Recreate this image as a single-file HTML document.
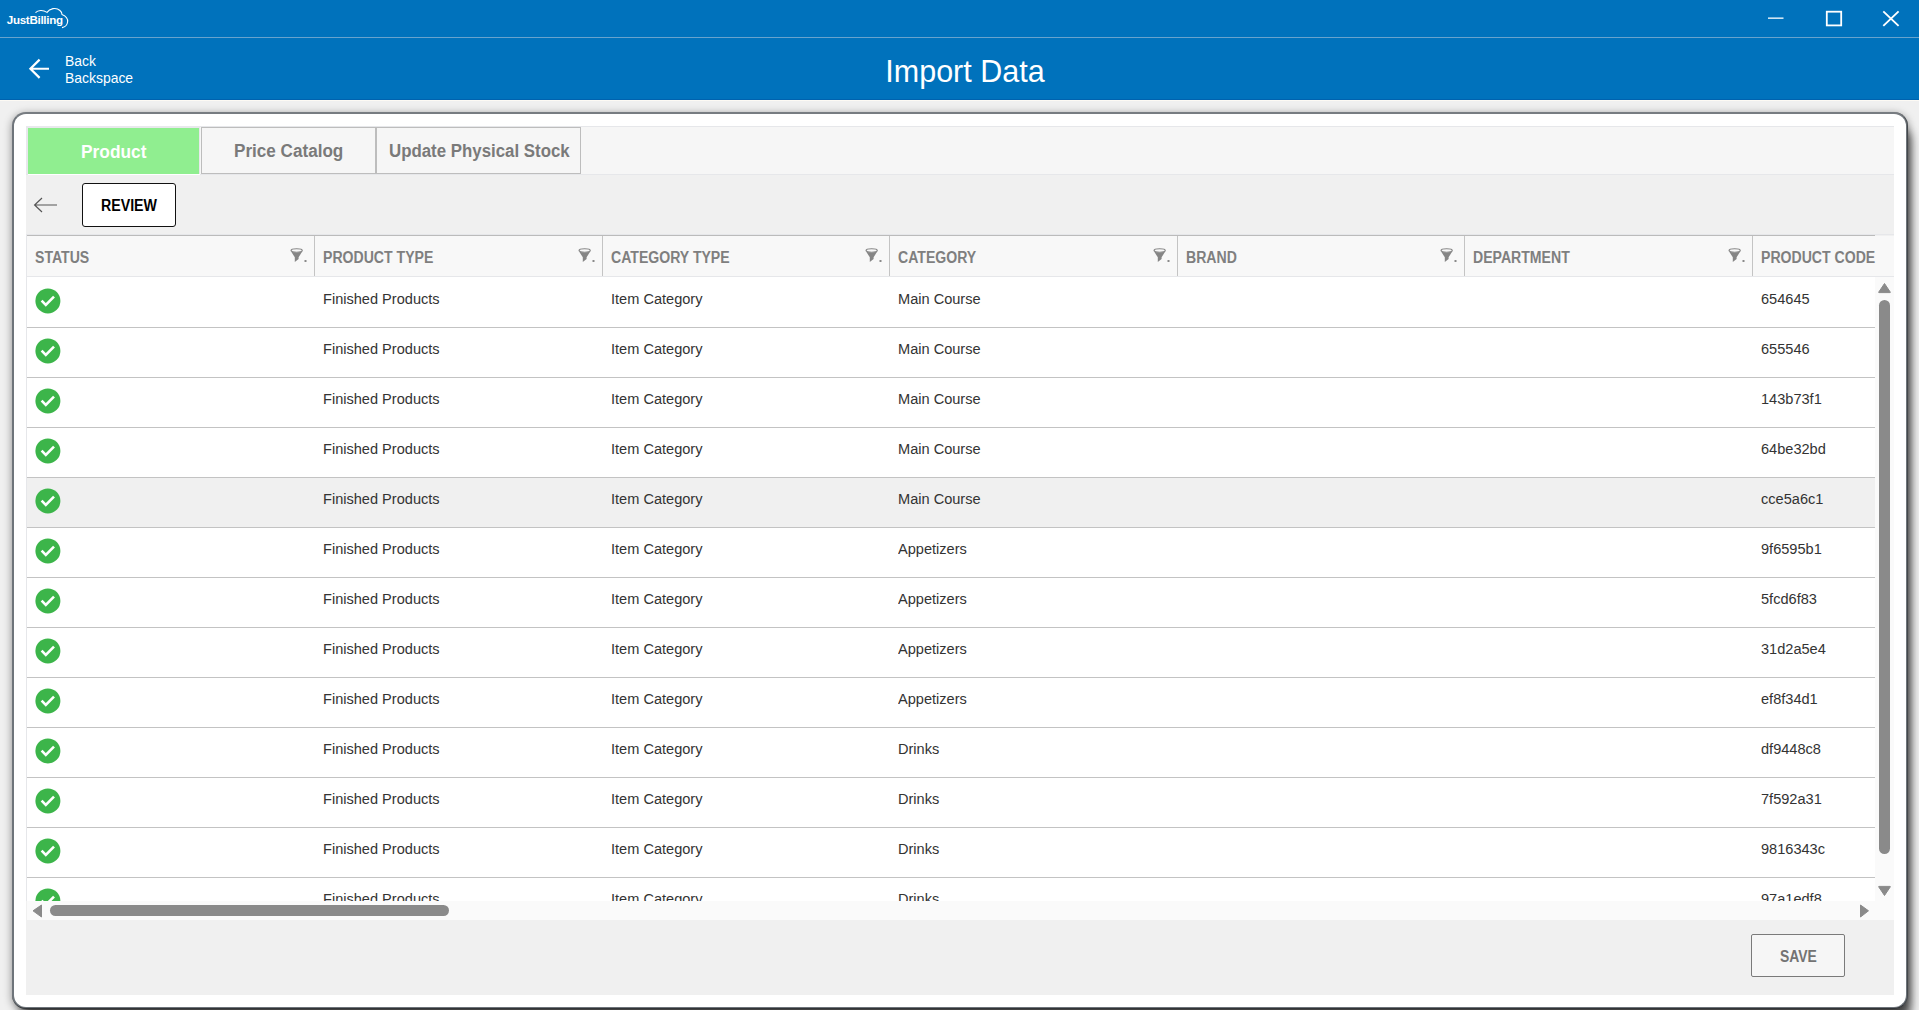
<!DOCTYPE html>
<html><head><meta charset="utf-8"><style>
html,body{margin:0;padding:0;}
body{width:1919px;height:1010px;overflow:hidden;position:relative;background:#F0F0F0;font-family:"Liberation Sans",sans-serif;}
.t{position:absolute;white-space:nowrap;}
.a{position:absolute;}
</style></head><body>
<div class="a" style="left:0;top:0;width:1919px;height:100px;background:#0072BC"></div>
<div class="a" style="left:0;top:37px;width:1919px;height:1px;background:#68A3CD"></div>
<div class="a" style="left:0;top:99px;width:1919px;height:1px;background:#0062AE"></div>
<div class="a" style="left:0;top:100px;width:1919px;height:1px;background:#FDFAF4"></div>
<svg class="a" style="left:0;top:0" width="80" height="37" viewBox="0 0 80 37">
<text x="6.8" y="24" font-family="Liberation Sans" font-weight="700" font-size="11.6" fill="#fff" letter-spacing="-0.3">JustBilling</text>
<path d="M35.5 12.6 C38 10,43 9.6,47 12.4 C49.5 8.5,56 6.8,60 10.5 C61.5 11.8,62 13,62 14.4 C66 16,68 19,67.6 22 C67.2 25,65 27,62 27.6" fill="none" stroke="#fff" stroke-width="1.1"/>
</svg>
<svg class="a" style="left:1760px;top:0" width="159" height="37" viewBox="0 0 159 37">
<rect x="8" y="17.5" width="15.5" height="1.3" fill="#fff"/>
<rect x="66.8" y="11.7" width="14.4" height="13.7" fill="none" stroke="#fff" stroke-width="1.8"/>
<path d="M123.3 11.4 L138.6 25.9 M138.6 11.4 L123.3 25.9" stroke="#fff" stroke-width="1.9"/>
</svg>
<svg class="a" style="left:20px;top:50px" width="40" height="40" viewBox="0 0 40 40">
<path d="M29 18.75 H10.5 M19.6 9.6 L10.4 18.75 L19.6 27.9" fill="none" stroke="#fff" stroke-width="2.2"/>
</svg>
<div class="t" style="left:65px;top:53px;font-size:15.5px;line-height:15.5px;transform:scaleX(0.897);transform-origin:0 0;color:#fff;font-weight:400;">Back</div>
<div class="t" style="left:65px;top:70.4px;font-size:15px;line-height:15px;transform:scaleX(0.928);transform-origin:0 0;color:#fff;font-weight:400;">Backspace</div>
<div class="t" style="left:885.3px;top:55.6px;font-size:30.5px;line-height:30.5px;letter-spacing:0px;color:#fff;font-weight:400;">Import Data</div>
<div class="a" style="left:12px;top:112px;width:1892px;height:893px;border:2px solid #6E747A;border-top-color:#777C81;border-radius:14px;background:#fff;box-shadow:0 2px 8px rgba(0,0,0,0.42), 6.5px 14px 10px -3.5px rgba(0,0,0,0.63)"></div>
<div class="a" style="left:12px;top:112px;width:1896px;height:897px;box-sizing:border-box;border-right:1px solid rgba(0,0,0,0.38);border-bottom:1px solid rgba(0,0,0,0.55);border-radius:14px"></div>
<div class="a" style="left:26px;top:126px;width:1868px;height:869px;background:#F0F0F0"></div>
<div class="a" style="left:26px;top:126px;width:1868px;height:48px;background:#F6F6F6;border-top:1px solid #E6E7EA;box-sizing:border-box"></div>
<div class="a" style="left:26px;top:174px;width:1868px;height:1px;background:#E6E7EA"></div>
<div class="a" style="left:26px;top:126px;width:174px;height:48px;background:#E8E8EC"></div>
<div class="a" style="left:28px;top:174px;width:172px;height:1px;background:#fff"></div>
<div class="a" style="left:28px;top:128px;width:171px;height:46px;background:#90EE90"></div>
<div class="a" style="left:201px;top:127px;width:175px;height:47px;border:1px solid #BDBDBD;box-sizing:border-box;background:#F6F6F6"></div>
<div class="a" style="left:376px;top:127px;width:205px;height:47px;border:1px solid #BDBDBD;box-sizing:border-box;background:#F6F6F6"></div>
<div class="t" style="left:81.3px;top:143px;font-size:18px;line-height:18px;transform:scaleX(0.963);transform-origin:0 0;color:#fff;font-weight:700;">Product</div>
<div class="t" style="left:234px;top:141.8px;font-size:18px;line-height:18px;transform:scaleX(0.95);transform-origin:0 0;color:#7A7A7A;font-weight:700;">Price Catalog</div>
<div class="t" style="left:389.2px;top:141.8px;font-size:18px;line-height:18px;transform:scaleX(0.936);transform-origin:0 0;color:#7A7A7A;font-weight:700;">Update Physical Stock</div>
<svg class="a" style="left:30px;top:195px" width="30" height="20" viewBox="0 0 30 20">
<path d="M27 10 H5 M12 3 L4.6 10 L12 17" fill="none" stroke="#555" stroke-width="1.2"/>
</svg>
<div class="a" style="left:82px;top:183px;width:94px;height:44px;border:1.5px solid #111;border-radius:3px;box-sizing:border-box;background:#fff"></div>
<div class="t" style="left:100.7px;top:198px;font-size:16px;line-height:16px;transform:scaleX(0.887);transform-origin:0 0;color:#000;font-weight:700;">REVIEW</div>
<div class="a" style="left:26px;top:234px;width:1868px;height:1px;background:#E6E7EA"></div>
<div class="a" style="left:26px;top:235px;width:1849px;height:1px;background:#BBBBBB"></div>
<div class="a" style="left:27px;top:236px;width:1867px;height:40px;background:#F8F8F8"></div>
<div class="a" style="left:27px;top:276px;width:1867px;height:1px;background:#E6E7EA"></div>
<div class="a" style="left:26px;top:235px;width:1px;height:666px;background:#E6E7EA"></div>
<div class="t" style="left:35.4px;top:250.2px;font-size:16px;line-height:16px;transform:scaleX(0.88);transform-origin:0 0;color:#7F7F7F;font-weight:700;">STATUS</div>
<div class="a" style="left:314px;top:236px;width:1px;height:40px;background:#C4C4C4"></div>
<svg class="a" style="left:290.3px;top:248px" width="18" height="16" viewBox="0 0 18 16"><ellipse cx="6.65" cy="2.5" rx="5.6" ry="1.75" fill="none" stroke="#858585" stroke-width="1.2"/><path d="M1.1 3.6 L4.8 9.3 L4.8 14 L8.6 10.9 L8.6 9.3 L12.2 3.6 Q6.65 5.9 1.1 3.6Z" fill="#858585"/><rect x="14.5" y="12" width="2" height="2" fill="#8A8A8A"/></svg>
<div class="t" style="left:322.9px;top:250.2px;font-size:16px;line-height:16px;transform:scaleX(0.88);transform-origin:0 0;color:#7F7F7F;font-weight:700;">PRODUCT TYPE</div>
<div class="a" style="left:602px;top:236px;width:1px;height:40px;background:#C4C4C4"></div>
<svg class="a" style="left:577.8px;top:248px" width="18" height="16" viewBox="0 0 18 16"><ellipse cx="6.65" cy="2.5" rx="5.6" ry="1.75" fill="none" stroke="#858585" stroke-width="1.2"/><path d="M1.1 3.6 L4.8 9.3 L4.8 14 L8.6 10.9 L8.6 9.3 L12.2 3.6 Q6.65 5.9 1.1 3.6Z" fill="#858585"/><rect x="14.5" y="12" width="2" height="2" fill="#8A8A8A"/></svg>
<div class="t" style="left:610.9px;top:250.2px;font-size:16px;line-height:16px;transform:scaleX(0.88);transform-origin:0 0;color:#7F7F7F;font-weight:700;">CATEGORY TYPE</div>
<div class="a" style="left:889px;top:236px;width:1px;height:40px;background:#C4C4C4"></div>
<svg class="a" style="left:865.3px;top:248px" width="18" height="16" viewBox="0 0 18 16"><ellipse cx="6.65" cy="2.5" rx="5.6" ry="1.75" fill="none" stroke="#858585" stroke-width="1.2"/><path d="M1.1 3.6 L4.8 9.3 L4.8 14 L8.6 10.9 L8.6 9.3 L12.2 3.6 Q6.65 5.9 1.1 3.6Z" fill="#858585"/><rect x="14.5" y="12" width="2" height="2" fill="#8A8A8A"/></svg>
<div class="t" style="left:897.9px;top:250.2px;font-size:16px;line-height:16px;transform:scaleX(0.88);transform-origin:0 0;color:#7F7F7F;font-weight:700;">CATEGORY</div>
<div class="a" style="left:1177px;top:236px;width:1px;height:40px;background:#C4C4C4"></div>
<svg class="a" style="left:1152.8px;top:248px" width="18" height="16" viewBox="0 0 18 16"><ellipse cx="6.65" cy="2.5" rx="5.6" ry="1.75" fill="none" stroke="#858585" stroke-width="1.2"/><path d="M1.1 3.6 L4.8 9.3 L4.8 14 L8.6 10.9 L8.6 9.3 L12.2 3.6 Q6.65 5.9 1.1 3.6Z" fill="#858585"/><rect x="14.5" y="12" width="2" height="2" fill="#8A8A8A"/></svg>
<div class="t" style="left:1185.9px;top:250.2px;font-size:16px;line-height:16px;transform:scaleX(0.88);transform-origin:0 0;color:#7F7F7F;font-weight:700;">BRAND</div>
<div class="a" style="left:1464px;top:236px;width:1px;height:40px;background:#C4C4C4"></div>
<svg class="a" style="left:1440.3px;top:248px" width="18" height="16" viewBox="0 0 18 16"><ellipse cx="6.65" cy="2.5" rx="5.6" ry="1.75" fill="none" stroke="#858585" stroke-width="1.2"/><path d="M1.1 3.6 L4.8 9.3 L4.8 14 L8.6 10.9 L8.6 9.3 L12.2 3.6 Q6.65 5.9 1.1 3.6Z" fill="#858585"/><rect x="14.5" y="12" width="2" height="2" fill="#8A8A8A"/></svg>
<div class="t" style="left:1472.9px;top:250.2px;font-size:16px;line-height:16px;transform:scaleX(0.88);transform-origin:0 0;color:#7F7F7F;font-weight:700;">DEPARTMENT</div>
<div class="a" style="left:1752px;top:236px;width:1px;height:40px;background:#C4C4C4"></div>
<svg class="a" style="left:1727.8px;top:248px" width="18" height="16" viewBox="0 0 18 16"><ellipse cx="6.65" cy="2.5" rx="5.6" ry="1.75" fill="none" stroke="#858585" stroke-width="1.2"/><path d="M1.1 3.6 L4.8 9.3 L4.8 14 L8.6 10.9 L8.6 9.3 L12.2 3.6 Q6.65 5.9 1.1 3.6Z" fill="#858585"/><rect x="14.5" y="12" width="2" height="2" fill="#8A8A8A"/></svg>
<div class="t" style="left:1760.9px;top:250.2px;font-size:16px;line-height:16px;transform:scaleX(0.88);transform-origin:0 0;color:#7F7F7F;font-weight:700;">PRODUCT CODE</div>
<div class="a" style="left:27px;top:277px;width:1848px;height:624px;overflow:hidden;background:#fff">
<div class="a" style="left:0;top:50px;width:1848px;height:1px;background:#C3C3C3"></div>
<svg class="a" style="left:7.5px;top:10.5px" width="26" height="26" viewBox="0 0 26 26"><circle cx="12.9" cy="12.9" r="12.5" fill="#3CB54A"/><path d="M6.6 12.6 L10.8 16.9 L19 8.6" fill="none" stroke="#fff" stroke-width="2.6"/></svg>
<div class="t" style="left:295.5px;top:14px;font-size:15.5px;line-height:15.5px;transform:scaleX(0.94);transform-origin:0 0;color:#333333;font-weight:400;">Finished Products</div>
<div class="t" style="left:583.5px;top:14px;font-size:15.5px;line-height:15.5px;transform:scaleX(0.94);transform-origin:0 0;color:#333333;font-weight:400;">Item Category</div>
<div class="t" style="left:870.5px;top:14px;font-size:15.5px;line-height:15.5px;transform:scaleX(0.94);transform-origin:0 0;color:#333333;font-weight:400;">Main Course</div>
<div class="t" style="left:1733.5px;top:14px;font-size:15.5px;line-height:15.5px;transform:scaleX(0.94);transform-origin:0 0;color:#333333;font-weight:400;">654645</div>
<div class="a" style="left:0;top:100px;width:1848px;height:1px;background:#C3C3C3"></div>
<svg class="a" style="left:7.5px;top:60.5px" width="26" height="26" viewBox="0 0 26 26"><circle cx="12.9" cy="12.9" r="12.5" fill="#3CB54A"/><path d="M6.6 12.6 L10.8 16.9 L19 8.6" fill="none" stroke="#fff" stroke-width="2.6"/></svg>
<div class="t" style="left:295.5px;top:64px;font-size:15.5px;line-height:15.5px;transform:scaleX(0.94);transform-origin:0 0;color:#333333;font-weight:400;">Finished Products</div>
<div class="t" style="left:583.5px;top:64px;font-size:15.5px;line-height:15.5px;transform:scaleX(0.94);transform-origin:0 0;color:#333333;font-weight:400;">Item Category</div>
<div class="t" style="left:870.5px;top:64px;font-size:15.5px;line-height:15.5px;transform:scaleX(0.94);transform-origin:0 0;color:#333333;font-weight:400;">Main Course</div>
<div class="t" style="left:1733.5px;top:64px;font-size:15.5px;line-height:15.5px;transform:scaleX(0.94);transform-origin:0 0;color:#333333;font-weight:400;">655546</div>
<div class="a" style="left:0;top:150px;width:1848px;height:1px;background:#C3C3C3"></div>
<svg class="a" style="left:7.5px;top:110.5px" width="26" height="26" viewBox="0 0 26 26"><circle cx="12.9" cy="12.9" r="12.5" fill="#3CB54A"/><path d="M6.6 12.6 L10.8 16.9 L19 8.6" fill="none" stroke="#fff" stroke-width="2.6"/></svg>
<div class="t" style="left:295.5px;top:114px;font-size:15.5px;line-height:15.5px;transform:scaleX(0.94);transform-origin:0 0;color:#333333;font-weight:400;">Finished Products</div>
<div class="t" style="left:583.5px;top:114px;font-size:15.5px;line-height:15.5px;transform:scaleX(0.94);transform-origin:0 0;color:#333333;font-weight:400;">Item Category</div>
<div class="t" style="left:870.5px;top:114px;font-size:15.5px;line-height:15.5px;transform:scaleX(0.94);transform-origin:0 0;color:#333333;font-weight:400;">Main Course</div>
<div class="t" style="left:1733.5px;top:114px;font-size:15.5px;line-height:15.5px;transform:scaleX(0.94);transform-origin:0 0;color:#333333;font-weight:400;">143b73f1</div>
<div class="a" style="left:0;top:200px;width:1848px;height:1px;background:#C3C3C3"></div>
<svg class="a" style="left:7.5px;top:160.5px" width="26" height="26" viewBox="0 0 26 26"><circle cx="12.9" cy="12.9" r="12.5" fill="#3CB54A"/><path d="M6.6 12.6 L10.8 16.9 L19 8.6" fill="none" stroke="#fff" stroke-width="2.6"/></svg>
<div class="t" style="left:295.5px;top:164px;font-size:15.5px;line-height:15.5px;transform:scaleX(0.94);transform-origin:0 0;color:#333333;font-weight:400;">Finished Products</div>
<div class="t" style="left:583.5px;top:164px;font-size:15.5px;line-height:15.5px;transform:scaleX(0.94);transform-origin:0 0;color:#333333;font-weight:400;">Item Category</div>
<div class="t" style="left:870.5px;top:164px;font-size:15.5px;line-height:15.5px;transform:scaleX(0.94);transform-origin:0 0;color:#333333;font-weight:400;">Main Course</div>
<div class="t" style="left:1733.5px;top:164px;font-size:15.5px;line-height:15.5px;transform:scaleX(0.94);transform-origin:0 0;color:#333333;font-weight:400;">64be32bd</div>
<div class="a" style="left:0;top:201px;width:1848px;height:49px;background:#F0F0F0"></div>
<div class="a" style="left:0;top:250px;width:1848px;height:1px;background:#C3C3C3"></div>
<svg class="a" style="left:7.5px;top:210.5px" width="26" height="26" viewBox="0 0 26 26"><circle cx="12.9" cy="12.9" r="12.5" fill="#3CB54A"/><path d="M6.6 12.6 L10.8 16.9 L19 8.6" fill="none" stroke="#fff" stroke-width="2.6"/></svg>
<div class="t" style="left:295.5px;top:214px;font-size:15.5px;line-height:15.5px;transform:scaleX(0.94);transform-origin:0 0;color:#333333;font-weight:400;">Finished Products</div>
<div class="t" style="left:583.5px;top:214px;font-size:15.5px;line-height:15.5px;transform:scaleX(0.94);transform-origin:0 0;color:#333333;font-weight:400;">Item Category</div>
<div class="t" style="left:870.5px;top:214px;font-size:15.5px;line-height:15.5px;transform:scaleX(0.94);transform-origin:0 0;color:#333333;font-weight:400;">Main Course</div>
<div class="t" style="left:1733.5px;top:214px;font-size:15.5px;line-height:15.5px;transform:scaleX(0.94);transform-origin:0 0;color:#333333;font-weight:400;">cce5a6c1</div>
<div class="a" style="left:0;top:300px;width:1848px;height:1px;background:#C3C3C3"></div>
<svg class="a" style="left:7.5px;top:260.5px" width="26" height="26" viewBox="0 0 26 26"><circle cx="12.9" cy="12.9" r="12.5" fill="#3CB54A"/><path d="M6.6 12.6 L10.8 16.9 L19 8.6" fill="none" stroke="#fff" stroke-width="2.6"/></svg>
<div class="t" style="left:295.5px;top:264px;font-size:15.5px;line-height:15.5px;transform:scaleX(0.94);transform-origin:0 0;color:#333333;font-weight:400;">Finished Products</div>
<div class="t" style="left:583.5px;top:264px;font-size:15.5px;line-height:15.5px;transform:scaleX(0.94);transform-origin:0 0;color:#333333;font-weight:400;">Item Category</div>
<div class="t" style="left:870.5px;top:264px;font-size:15.5px;line-height:15.5px;transform:scaleX(0.94);transform-origin:0 0;color:#333333;font-weight:400;">Appetizers</div>
<div class="t" style="left:1733.5px;top:264px;font-size:15.5px;line-height:15.5px;transform:scaleX(0.94);transform-origin:0 0;color:#333333;font-weight:400;">9f6595b1</div>
<div class="a" style="left:0;top:350px;width:1848px;height:1px;background:#C3C3C3"></div>
<svg class="a" style="left:7.5px;top:310.5px" width="26" height="26" viewBox="0 0 26 26"><circle cx="12.9" cy="12.9" r="12.5" fill="#3CB54A"/><path d="M6.6 12.6 L10.8 16.9 L19 8.6" fill="none" stroke="#fff" stroke-width="2.6"/></svg>
<div class="t" style="left:295.5px;top:314px;font-size:15.5px;line-height:15.5px;transform:scaleX(0.94);transform-origin:0 0;color:#333333;font-weight:400;">Finished Products</div>
<div class="t" style="left:583.5px;top:314px;font-size:15.5px;line-height:15.5px;transform:scaleX(0.94);transform-origin:0 0;color:#333333;font-weight:400;">Item Category</div>
<div class="t" style="left:870.5px;top:314px;font-size:15.5px;line-height:15.5px;transform:scaleX(0.94);transform-origin:0 0;color:#333333;font-weight:400;">Appetizers</div>
<div class="t" style="left:1733.5px;top:314px;font-size:15.5px;line-height:15.5px;transform:scaleX(0.94);transform-origin:0 0;color:#333333;font-weight:400;">5fcd6f83</div>
<div class="a" style="left:0;top:400px;width:1848px;height:1px;background:#C3C3C3"></div>
<svg class="a" style="left:7.5px;top:360.5px" width="26" height="26" viewBox="0 0 26 26"><circle cx="12.9" cy="12.9" r="12.5" fill="#3CB54A"/><path d="M6.6 12.6 L10.8 16.9 L19 8.6" fill="none" stroke="#fff" stroke-width="2.6"/></svg>
<div class="t" style="left:295.5px;top:364px;font-size:15.5px;line-height:15.5px;transform:scaleX(0.94);transform-origin:0 0;color:#333333;font-weight:400;">Finished Products</div>
<div class="t" style="left:583.5px;top:364px;font-size:15.5px;line-height:15.5px;transform:scaleX(0.94);transform-origin:0 0;color:#333333;font-weight:400;">Item Category</div>
<div class="t" style="left:870.5px;top:364px;font-size:15.5px;line-height:15.5px;transform:scaleX(0.94);transform-origin:0 0;color:#333333;font-weight:400;">Appetizers</div>
<div class="t" style="left:1733.5px;top:364px;font-size:15.5px;line-height:15.5px;transform:scaleX(0.94);transform-origin:0 0;color:#333333;font-weight:400;">31d2a5e4</div>
<div class="a" style="left:0;top:450px;width:1848px;height:1px;background:#C3C3C3"></div>
<svg class="a" style="left:7.5px;top:410.5px" width="26" height="26" viewBox="0 0 26 26"><circle cx="12.9" cy="12.9" r="12.5" fill="#3CB54A"/><path d="M6.6 12.6 L10.8 16.9 L19 8.6" fill="none" stroke="#fff" stroke-width="2.6"/></svg>
<div class="t" style="left:295.5px;top:414px;font-size:15.5px;line-height:15.5px;transform:scaleX(0.94);transform-origin:0 0;color:#333333;font-weight:400;">Finished Products</div>
<div class="t" style="left:583.5px;top:414px;font-size:15.5px;line-height:15.5px;transform:scaleX(0.94);transform-origin:0 0;color:#333333;font-weight:400;">Item Category</div>
<div class="t" style="left:870.5px;top:414px;font-size:15.5px;line-height:15.5px;transform:scaleX(0.94);transform-origin:0 0;color:#333333;font-weight:400;">Appetizers</div>
<div class="t" style="left:1733.5px;top:414px;font-size:15.5px;line-height:15.5px;transform:scaleX(0.94);transform-origin:0 0;color:#333333;font-weight:400;">ef8f34d1</div>
<div class="a" style="left:0;top:500px;width:1848px;height:1px;background:#C3C3C3"></div>
<svg class="a" style="left:7.5px;top:460.5px" width="26" height="26" viewBox="0 0 26 26"><circle cx="12.9" cy="12.9" r="12.5" fill="#3CB54A"/><path d="M6.6 12.6 L10.8 16.9 L19 8.6" fill="none" stroke="#fff" stroke-width="2.6"/></svg>
<div class="t" style="left:295.5px;top:464px;font-size:15.5px;line-height:15.5px;transform:scaleX(0.94);transform-origin:0 0;color:#333333;font-weight:400;">Finished Products</div>
<div class="t" style="left:583.5px;top:464px;font-size:15.5px;line-height:15.5px;transform:scaleX(0.94);transform-origin:0 0;color:#333333;font-weight:400;">Item Category</div>
<div class="t" style="left:870.5px;top:464px;font-size:15.5px;line-height:15.5px;transform:scaleX(0.94);transform-origin:0 0;color:#333333;font-weight:400;">Drinks</div>
<div class="t" style="left:1733.5px;top:464px;font-size:15.5px;line-height:15.5px;transform:scaleX(0.94);transform-origin:0 0;color:#333333;font-weight:400;">df9448c8</div>
<div class="a" style="left:0;top:550px;width:1848px;height:1px;background:#C3C3C3"></div>
<svg class="a" style="left:7.5px;top:510.5px" width="26" height="26" viewBox="0 0 26 26"><circle cx="12.9" cy="12.9" r="12.5" fill="#3CB54A"/><path d="M6.6 12.6 L10.8 16.9 L19 8.6" fill="none" stroke="#fff" stroke-width="2.6"/></svg>
<div class="t" style="left:295.5px;top:514px;font-size:15.5px;line-height:15.5px;transform:scaleX(0.94);transform-origin:0 0;color:#333333;font-weight:400;">Finished Products</div>
<div class="t" style="left:583.5px;top:514px;font-size:15.5px;line-height:15.5px;transform:scaleX(0.94);transform-origin:0 0;color:#333333;font-weight:400;">Item Category</div>
<div class="t" style="left:870.5px;top:514px;font-size:15.5px;line-height:15.5px;transform:scaleX(0.94);transform-origin:0 0;color:#333333;font-weight:400;">Drinks</div>
<div class="t" style="left:1733.5px;top:514px;font-size:15.5px;line-height:15.5px;transform:scaleX(0.94);transform-origin:0 0;color:#333333;font-weight:400;">7f592a31</div>
<div class="a" style="left:0;top:600px;width:1848px;height:1px;background:#C3C3C3"></div>
<svg class="a" style="left:7.5px;top:560.5px" width="26" height="26" viewBox="0 0 26 26"><circle cx="12.9" cy="12.9" r="12.5" fill="#3CB54A"/><path d="M6.6 12.6 L10.8 16.9 L19 8.6" fill="none" stroke="#fff" stroke-width="2.6"/></svg>
<div class="t" style="left:295.5px;top:564px;font-size:15.5px;line-height:15.5px;transform:scaleX(0.94);transform-origin:0 0;color:#333333;font-weight:400;">Finished Products</div>
<div class="t" style="left:583.5px;top:564px;font-size:15.5px;line-height:15.5px;transform:scaleX(0.94);transform-origin:0 0;color:#333333;font-weight:400;">Item Category</div>
<div class="t" style="left:870.5px;top:564px;font-size:15.5px;line-height:15.5px;transform:scaleX(0.94);transform-origin:0 0;color:#333333;font-weight:400;">Drinks</div>
<div class="t" style="left:1733.5px;top:564px;font-size:15.5px;line-height:15.5px;transform:scaleX(0.94);transform-origin:0 0;color:#333333;font-weight:400;">9816343c</div>
<div class="a" style="left:0;top:650px;width:1848px;height:1px;background:#C3C3C3"></div>
<svg class="a" style="left:7.5px;top:610.5px" width="26" height="26" viewBox="0 0 26 26"><circle cx="12.9" cy="12.9" r="12.5" fill="#3CB54A"/><path d="M6.6 12.6 L10.8 16.9 L19 8.6" fill="none" stroke="#fff" stroke-width="2.6"/></svg>
<div class="t" style="left:295.5px;top:614px;font-size:15.5px;line-height:15.5px;transform:scaleX(0.94);transform-origin:0 0;color:#333333;font-weight:400;">Finished Products</div>
<div class="t" style="left:583.5px;top:614px;font-size:15.5px;line-height:15.5px;transform:scaleX(0.94);transform-origin:0 0;color:#333333;font-weight:400;">Item Category</div>
<div class="t" style="left:870.5px;top:614px;font-size:15.5px;line-height:15.5px;transform:scaleX(0.94);transform-origin:0 0;color:#333333;font-weight:400;">Drinks</div>
<div class="t" style="left:1733.5px;top:614px;font-size:15.5px;line-height:15.5px;transform:scaleX(0.94);transform-origin:0 0;color:#333333;font-weight:400;">97a1edf8</div>
</div>
<div class="a" style="left:1875px;top:277px;width:19px;height:643px;background:#FAFAFA"></div>
<svg class="a" style="left:1875px;top:277px" width="19" height="630" viewBox="0 0 19 630">
<path d="M9.5 6.5 L15.2 15 Q15.6 15.6 15 15.6 L4 15.6 Q3.4 15.6 3.8 15 Z" fill="#8A8A8A" stroke="#8A8A8A" stroke-width="1" stroke-linejoin="round"/>
<rect x="4" y="23" width="11" height="554" rx="5.5" fill="#8A8A8A"/>
<path d="M9.5 618.5 L15.2 610 Q15.6 609.4 15 609.4 L4 609.4 Q3.4 609.4 3.8 610 Z" fill="#8A8A8A" stroke="#8A8A8A" stroke-width="1" stroke-linejoin="round"/>
</svg>
<div class="a" style="left:27px;top:901px;width:1848px;height:19px;background:#FAFAFA"></div>
<svg class="a" style="left:27px;top:901px" width="1848" height="19" viewBox="0 0 1848 19">
<path d="M6 9.8 L14.5 4 L14.5 16 Z" fill="#8A8A8A" stroke="#8A8A8A" stroke-width="1" stroke-linejoin="round"/>
<rect x="23" y="4" width="399" height="11" rx="5.5" fill="#8A8A8A"/>
<path d="M1841.5 9.8 L1833.5 4 L1833.5 16 Z" fill="#8A8A8A" stroke="#8A8A8A" stroke-width="1" stroke-linejoin="round"/>
</svg>
<div class="a" style="left:1751px;top:934px;width:94px;height:43px;border:1px solid #7A7A7A;border-radius:2px;box-sizing:border-box;background:#F6F6F6"></div>
<div class="t" style="left:1779.5px;top:949px;font-size:16px;line-height:16px;transform:scaleX(0.87);transform-origin:0 0;color:#737373;font-weight:700;">SAVE</div>
</body></html>
